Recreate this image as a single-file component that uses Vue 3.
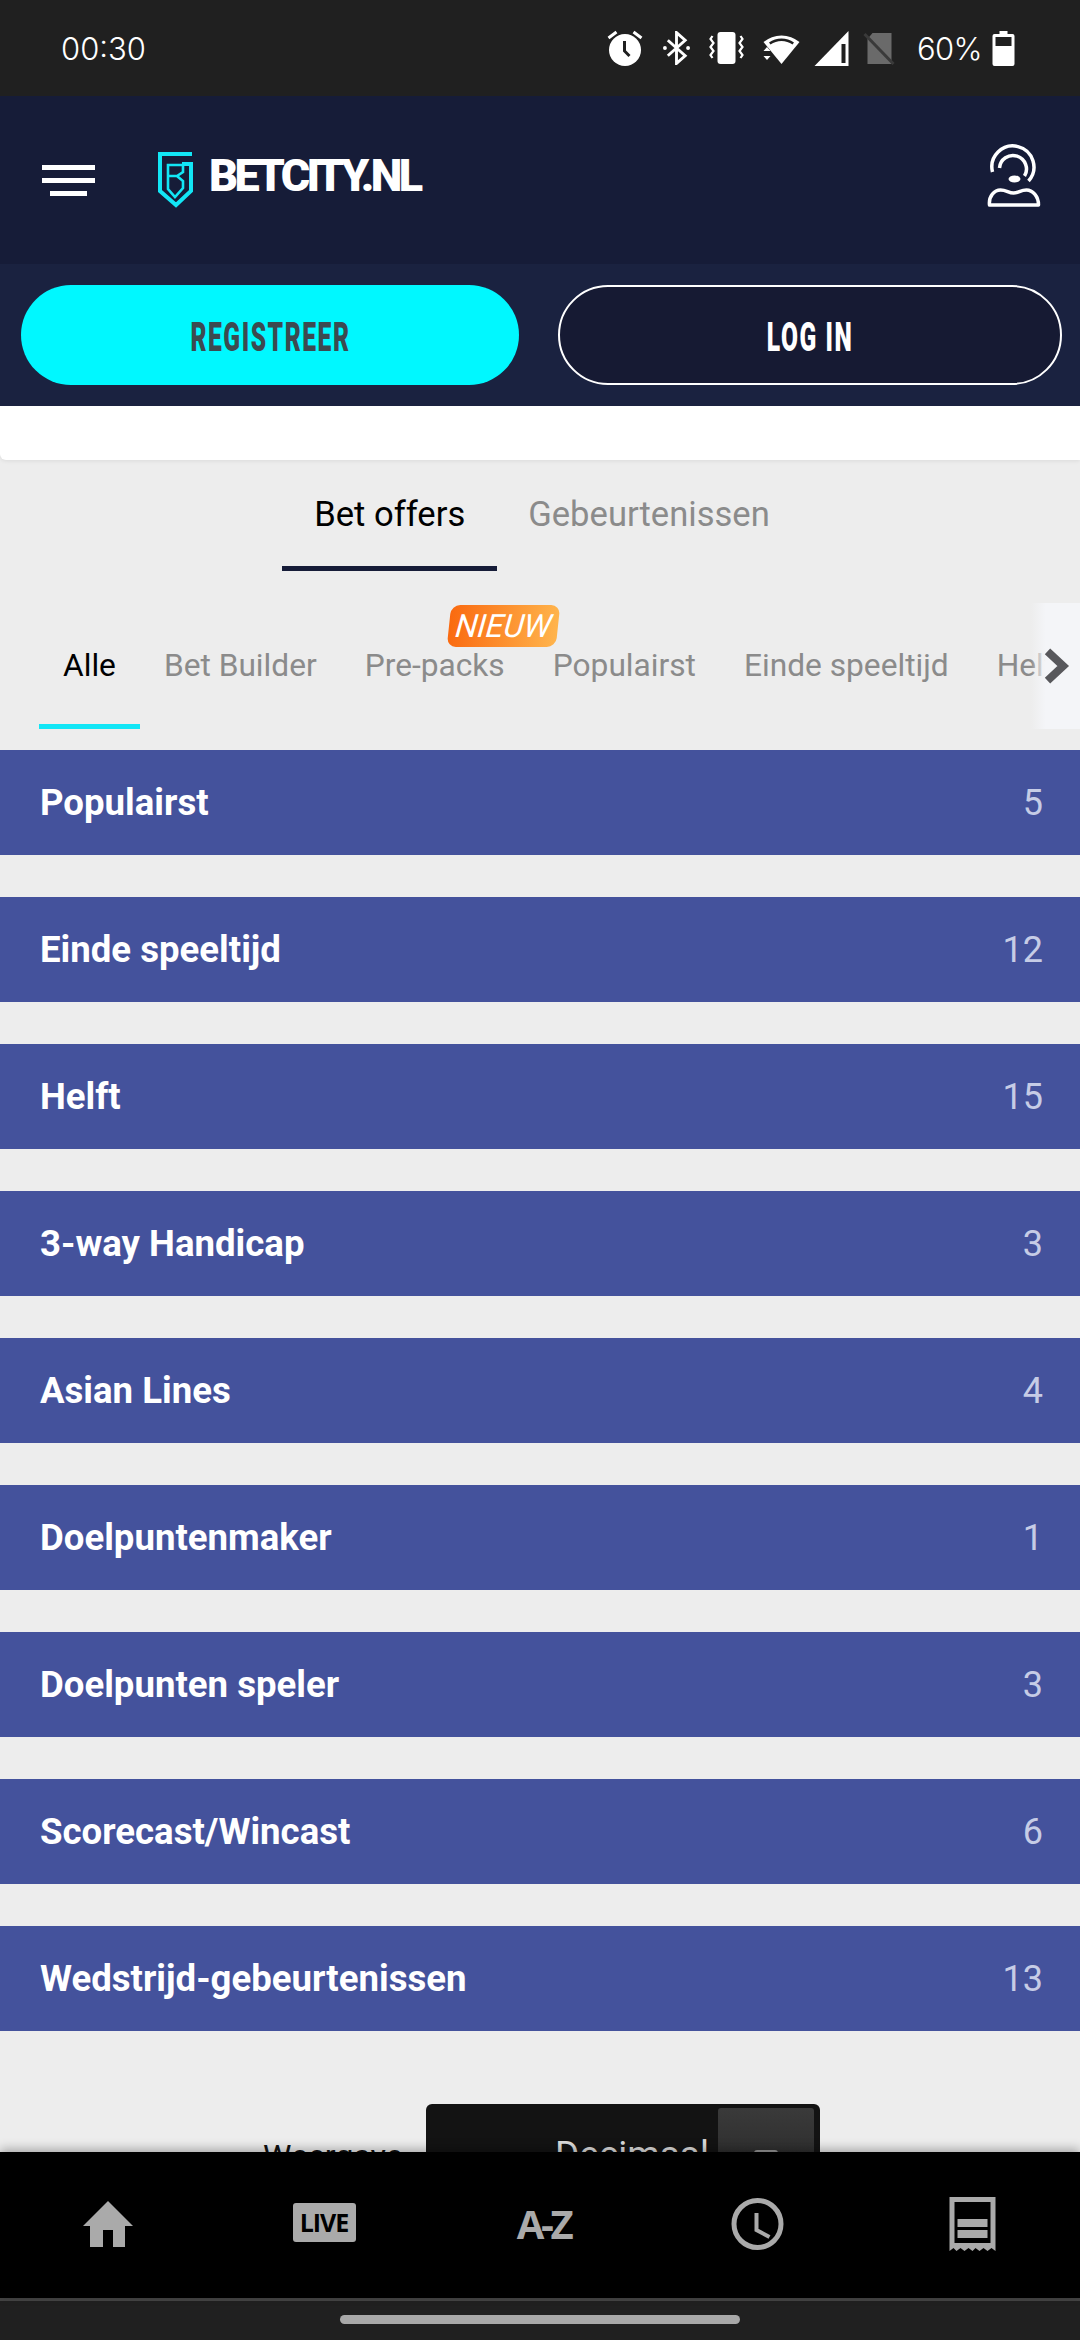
<template>
    <div class="phone">
        <div class="statusbar">
            <span class="clock">00:30</span>
            <div class="status-icons">
                <svg class="alarm" width="38" height="37" viewBox="0 0 37 37">
                    <circle cx="18.5" cy="20" r="16" fill="#fff"/>
                    <path d="M18 11v10l5 5" fill="none" stroke="#202020" stroke-width="3"/>
                    <path d="M2 8l8-6M35 8l-8-6" fill="none" stroke="#fff" stroke-width="3"/>
                </svg>
                <svg class="bt" width="27" height="34" viewBox="0 0 28 34">
                    <path d="M5 9l18 16-9 8V1l9 8L5 25" fill="none" stroke="#fff" stroke-width="3"/>
                    <circle cx="2" cy="17" r="2" fill="#fff"/>
                    <circle cx="26" cy="17" r="2" fill="#fff"/>
                </svg>
                <svg class="vib" width="35" height="32" viewBox="0 0 34 32">
                    <rect x="8" y="0" width="18" height="32" rx="3" fill="#fff"/>
                    <path d="M3 4l-2 3 3 4-3 4 3 4-3 4 2 3M31 4l2 3-3 4 3 4-3 4 3 4-2 3" fill="none" stroke="#fff" stroke-width="2.2"/>
                </svg>
                <svg class="wifi" width="39" height="32" viewBox="0 0 38 32">
                    <path d="M1 10a28 28 0 0 1 36 0L19 32z" fill="#fff"/>
                    <path d="M6.500 10.500a22 22 0 0 1 25 0l-1.500 2a19 19 0 0 0-22 0z" fill="#202020"/>
                    <path d="M1 19l3.500-4 3.500 4zM1 24l3.500 4 3.500-4z" fill="#fff"/>
                </svg>
                <svg class="signal" width="35" height="35" viewBox="0 0 34 35">
                    <path d="M0 35L34 0v35z" fill="#fff"/>
                    <rect x="27" y="13" width="4" height="19" fill="#202020"/>
                </svg>
                <svg class="nosim" width="33" height="33" viewBox="0 0 32 33">
                    <path d="M9 1h19v31H4V7z" fill="#6a6a6a"/>
                    <path d="M1 2l29 30" stroke="#3a3a3a" stroke-width="3"/>
                </svg>
                <span class="pct">60%</span>
                <svg class="batt" width="23" height="35" viewBox="0 0 22 35">
                    <path d="M7 0h8v3h5a2 2 0 0 1 2 2v28a2 2 0 0 1-2 2H2a2 2 0 0 1-2-2V5a2 2 0 0 1 2-2h5z" fill="#fff"/>
                    <rect x="3" y="6" width="16" height="9" fill="#202020"/>
                </svg>
            </div>
        </div>

        <header class="topbar">
            <div class="burger">
                <i></i><i></i><i class="short"></i>
            </div>
            <svg class="shield" width="35" height="57" viewBox="0 0 35 57">
                <path d="M34 2H2v37l16 14 15-14V12H24" fill="none" stroke="#12e6f6" stroke-width="4"/>
                <path d="M10 24h9M10 13h15v7l-6 4 6 5v7l-8 9-7-8z" fill="none" stroke="#12e6f6" stroke-width="2.600"/>
            </svg>
            <span class="brand">BETCITY.NL</span>
            <svg class="agent" width="55" height="64" viewBox="0 0 54 64">
                <path d="M6 28a21 21 0 1 1 36 9" fill="none" stroke="#fff" stroke-width="3.500"/>
                <path d="M13 24a13.500 13.500 0 1 1 25 8" fill="none" stroke="#fff" stroke-width="3.500"/>
                <ellipse cx="28" cy="35" rx="6" ry="3.500" fill="#fff"/>
                <path d="M3 61c-1-9 5-15 11-15 6 0 8 3 13 3s7-3 13-3c6 0 12 6 12 15z" fill="none" stroke="#fff" stroke-width="3.500" stroke-linejoin="round"/>
            </svg>
        </header>

        <div class="actions">
            <button class="btn register"><span>REGISTREER</span></button>
            <button class="btn login"><span>LOG IN</span></button>
        </div>

        <main class="content">
            <div class="whitebar"></div>

            <div class="tabs">
                <div class="tab active">Bet offers</div>
                <div class="tab">Gebeurtenissen</div>
            </div>

            <div class="subtabs">
                <div v-for="item in subTabs" :key="item" class="subtab" :class="{ active: item === 'Alle' }">
                    {{ item }}
                </div>
                <span class="badge"><em>NIEUW</em></span>
                <div class="more">
                    <svg width="27" height="36" viewBox="0 0 24 32">
                        <path d="M4 3l14 13L4 29" fill="none" stroke="#58585c" stroke-width="7"/>
                    </svg>
                </div>
            </div>

            <div class="groups">
                <div v-for="group in groups" :key="group.name" class="group">
                    <span class="name">{{ group.name }}</span>
                    <span class="count">{{ group.count }}</span>
                </div>
            </div>

            <div class="odds">
                <span class="odds-label">Weergave</span>
                <div class="select">
                    <span class="value">Decimaal</span>
                    <div class="arrow"><i></i></div>
                </div>
            </div>
        </main>

        <nav class="bottomnav">
            <svg width="50" height="46" viewBox="0 0 50 46">
                <path d="M25 0l25 25h-8v21H30V29H20v17H7V25H0z" fill="#aaa"/>
            </svg>
            <div class="live">LIVE</div>
            <div class="az">A-Z</div>
            <svg class="clock-icon" width="53" height="54" viewBox="0 0 52 54">
                <circle cx="26" cy="27" r="23.500" fill="none" stroke="#aaa" stroke-width="5"/>
                <path d="M25 16v17l13 7" fill="none" stroke="#aaa" stroke-width="4"/>
            </svg>
            <svg width="47" height="54" viewBox="0 0 46 54">
                <path d="M0 0h46v54l-4-3-4 3-4-3-4 3-4-3-3 3-4-3-4 3-4-3-4 3-3-3-4 3z" fill="#aaa"/>
                <rect x="5" y="5" width="36" height="41" fill="#000"/>
                <rect x="8" y="22" width="30" height="8" fill="#aaa"/>
                <rect x="8" y="33" width="30" height="8" fill="#aaa"/>
            </svg>
        </nav>

        <div class="navbar">
            <div class="handle"></div>
        </div>
    </div>
</template>

<script setup>
const subTabs = ['Alle', 'Bet Builder', 'Pre-packs', 'Populairst', 'Einde speeltijd', 'Helft']

const groups = [
    { name: 'Populairst', count: 5 },
    { name: 'Einde speeltijd', count: 12 },
    { name: 'Helft', count: 15 },
    { name: '3-way Handicap', count: 3 },
    { name: 'Asian Lines', count: 4 },
    { name: 'Doelpuntenmaker', count: 1 },
    { name: 'Doelpunten speler', count: 3 },
    { name: 'Scorecast/Wincast', count: 6 },
    { name: 'Wedstrijd-gebeurtenissen', count: 13 }
]
</script>

<style scoped>
.phone {
    display: flex;
    flex-direction: column;
    width: 1080px;
    height: 2340px;
    overflow: hidden;
    font-family: Roboto, sans-serif;
    background-color: #ededed;
}
svg {
    display: block;
    flex: none;
}

.statusbar {
    display: flex;
    flex: none;
    align-items: center;
    justify-content: space-between;
    height: 96px;
    padding: 0 65px 0 61px;
    box-sizing: border-box;
    color: #fff;
    background-color: #202020;
    font-family: Inter, sans-serif;
    font-weight: 300;
    font-size: 31px;
}
.status-icons {
    display: flex;
    align-items: center;
}
.alarm { margin-right: 19px; }
.bt { margin-right: 19px; }
.vib { margin-right: 18px; }
.wifi { margin-right: 13px; }
.signal { margin-right: 14px; }
.nosim { margin-right: 21px; }
.pct { width: 64px; margin-right: 11px; white-space: nowrap; letter-spacing: -0.7px; }

.topbar {
    display: flex;
    flex: none;
    align-items: center;
    height: 168px;
    padding: 0 39px 0 42px;
    box-sizing: border-box;
    background-color: #161c38;
}
.burger {
    display: flex;
    flex-direction: column;
    align-items: flex-start;
    gap: 8px;
    width: 53px;
    margin-right: 63px;
}
.burger i {
    display: block;
    width: 100%;
    height: 5px;
    background-color: #fff;
}
.burger i.short {
    width: 37px;
    margin-left: 8px;
}
.brand {
    margin-left: 16px;
    margin-bottom: 10px;
    color: #fff;
    font-family: Roboto, sans-serif;
    font-weight: 900;
    font-size: 45px;
    letter-spacing: -3.6px;
    white-space: nowrap;
}
.agent {
    margin-left: auto;
    margin-bottom: 9px;
}

.actions {
    display: flex;
    flex: none;
    gap: 39px;
    height: 142px;
    padding: 21px 18px 21px 21px;
    box-sizing: border-box;
    background-color: #1a2240;
}
.btn {
    display: flex;
    align-items: center;
    justify-content: center;
    height: 100px;
    padding: 4px 0 0;
    border-radius: 50px;
    font-family: Roboto, sans-serif;
    font-weight: 900;
    font-size: 41px;
    overflow: hidden;
}
.btn span {
    display: inline-block;
    transform: scaleX(0.6);
    letter-spacing: 2.6px;
    white-space: nowrap;
}
.register {
    width: 498px;
    border: 0;
    color: #3c4a50;
    background-color: #00f8ff;
}
.login {
    width: 504px;
    border: 2px solid #fff;
    color: #fff;
    background-color: #161a33;
}

.content {
    flex: 1;
    min-height: 0;
    overflow: hidden;
    background-color: #ededed;
}
.whitebar {
    height: 54px;
    border-radius: 0 0 0 6px;
    background-color: #fff;
    box-shadow: 0 1px 4px rgba(0,0,0,0.08);
}

.tabs {
    display: flex;
    justify-content: center;
    height: 111px;
    padding-left: 3px;
}
.tab {
    height: 111px;
    box-sizing: border-box;
    padding: 35px 31px 0;
    color: #8b8b8b;
    font-size: 34.6px;
    line-height: 38px;
    white-space: nowrap;
}
.tab.active {
    padding: 35px 32px 0;
    color: #000;
    border-bottom: 5px solid #161c38;
}

.subtabs {
    position: relative;
    display: flex;
    height: 147px;
    margin-top: 32px;
    padding-left: 39px;
    overflow: hidden;
}
.subtab {
    flex: none;
    height: 126px;
    box-sizing: border-box;
    padding: 45px 24px 0;
    color: #8b8b8b;
    font-size: 31.7px;
    line-height: 36px;
    white-space: nowrap;
}
.subtab.active {
    color: #000;
    border-bottom: 5px solid #12e6f6;
}
.badge {
    position: absolute;
    top: 2px;
    left: 449px;
    display: flex;
    align-items: center;
    justify-content: center;
    width: 109px;
    height: 42px;
    border-radius: 9px;
    color: #fff;
    background: linear-gradient(90deg, #fa6a10, #ffb44c);
    transform: skewX(-6deg);
    font-size: 32px;
}
.more {
    position: absolute;
    top: 0;
    right: 0;
    display: flex;
    align-items: center;
    width: 49px;
    height: 126px;
    padding-left: 12px;
    box-sizing: border-box;
    background: linear-gradient(90deg, rgba(244,245,248,0), #f4f5f8 30%);
}

.groups {
    display: flex;
    flex-direction: column;
    gap: 42px;
}
.group {
    display: flex;
    align-items: center;
    justify-content: space-between;
    height: 105px;
    padding: 0 37px 0 40px;
    box-sizing: border-box;
    color: #fff;
    background-color: #44529c;
    font-size: 36.6px;
    font-weight: 700;
}
.count {
    color: #c6cce6;
    font-size: 36px;
    font-weight: 400;
}

.odds {
    display: flex;
    align-items: flex-start;
    margin-top: 73px;
    padding-left: 263px;
}
.odds-label {
    width: 163px;
    padding-top: 33px;
    color: #111;
    font-size: 32px;
}
.select {
    display: flex;
    justify-content: space-between;
    width: 394px;
    height: 100px;
    padding: 4px 6px 0 129px;
    box-sizing: border-box;
    border-radius: 6px;
    color: #ddd;
    background-color: #131313;
    font-size: 37px;
}
.value {
    padding-top: 25px;
}
.arrow {
    width: 96px;
    height: 90px;
    padding-top: 42px;
    box-sizing: border-box;
    border-radius: 3px;
    background: linear-gradient(#3a3a3a, #242424);
}
.arrow i {
    display: block;
    width: 24px;
    height: 8px;
    margin: 0 auto;
    border-radius: 3px;
    background-color: #999;
}

.bottomnav {
    position: relative;
    display: grid;
    flex: none;
    grid-template-columns: repeat(5, 216px);
    align-items: center;
    justify-items: center;
    height: 146px;
    padding-bottom: 3px;
    box-sizing: border-box;
    background-color: #000;
    box-shadow: 0 -3px 10px rgba(0,0,0,0.3);
}
.clock-icon {
    margin-left: 3px;
}
.live {
    width: 63px;
    height: 39px;
    margin-bottom: 3px;
    border-radius: 3px;
    color: #000;
    background-color: #aaa;
    font-family: "Open Sans", sans-serif;
    font-weight: 700;
    font-size: 25px;
    line-height: 39px;
    letter-spacing: -1px;
    text-align: center;
}
.az {
    margin-left: 7px;
    color: #aaa;
    font-family: "Open Sans", sans-serif;
    font-weight: 700;
    font-size: 40px;
    letter-spacing: -3.4px;
}

.navbar {
    display: flex;
    flex: none;
    justify-content: center;
    height: 42px;
    padding-top: 14px;
    box-sizing: border-box;
    border-top: 3px solid #444;
    background-color: #202020;
}
.handle {
    width: 400px;
    height: 9px;
    border-radius: 5px;
    background-color: #a8a8a8;
}
</style>

<style>
body {
    margin: 0;
}
</style>
